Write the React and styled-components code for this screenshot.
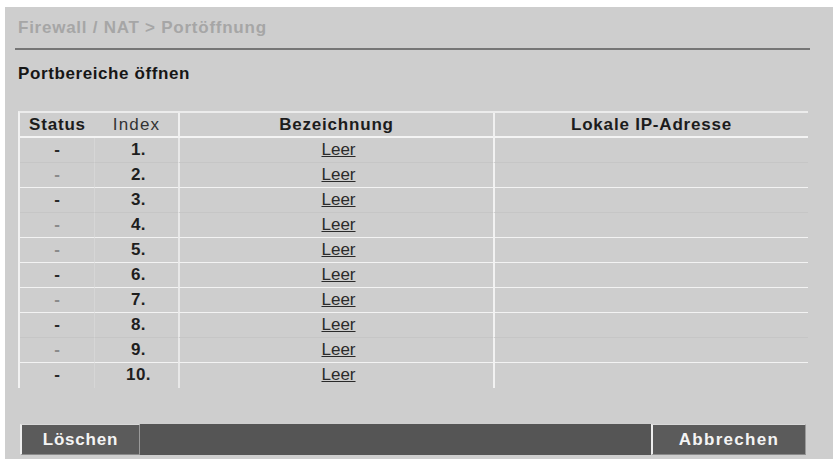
import styled, { createGlobalStyle } from "styled-components";

const GlobalStyle = createGlobalStyle`
    html, body {
        margin: 0;
        padding: 0;
        background: #ffffff;
    }
    body {
        font-family: "Liberation Sans", Arial, sans-serif;
    }
`

const rows = [
    { index: 1, faint: true },
    { index: 2, dim: true },
    { index: 3, faint: true },
    { index: 4, dim: true },
    { index: 5, dim: true },
    { index: 6 },
    { index: 7, dim: true },
    { index: 8, faint: true },
    { index: 9, dim: true },
    { index: 10, last: true },
]

export default function App() {
    return (
        <>
            <GlobalStyle />
            <Panel>
                <Breadcrumb>Firewall / NAT &gt; Portöffnung</Breadcrumb>
                <Rule />
                <Title>Portbereiche öffnen</Title>

                <Table>
                    <HeadCell>Status</HeadCell>
                    <HeadCell light>Index</HeadCell>
                    <HeadCell divider>Bezeichnung</HeadCell>
                    <HeadCell divider>Lokale IP-Adresse</HeadCell>
                    {
                        rows.map(r => (
                            <Row key={r.index} faint={r.faint} last={r.last}>
                                <StatusCell dim={r.dim}>-</StatusCell>
                                <IndexCell>{r.index}.</IndexCell>
                                <NameCell><a href="#">Leer</a></NameCell>
                                <IpCell />
                            </Row>
                        ))
                    }
                </Table>

                <ButtonBar>
                    <Button width="120px">Löschen</Button>
                    <Filler />
                    <Button width="155px" spacing="1.3px">Abbrechen</Button>
                </ButtonBar>
            </Panel>
        </>
    )
}

const Panel = styled.div`
    margin: 7px 4px 0 5px;
    min-height: calc(100vh - 7px);
    box-sizing: border-box;
    background-color: #cecece;
    padding: 10px 23px 0 10px;
    display: flex;
    flex-direction: column;
`
const Breadcrumb = styled.div`
    margin-left: 3px;
    height: 22px;
    line-height: 22px;
    font-size: 17px;
    font-weight: 700;
    letter-spacing: 0.75px;
    color: #a6a6a6;
`
const Rule = styled.div`
    margin-top: 9px;
    height: 2px;
    width: 795px;
    background-color: #767676;
`
const Title = styled.div`
    margin: 13px 0 0 3px;
    height: 22px;
    line-height: 22px;
    font-size: 17px;
    font-weight: 700;
    letter-spacing: 0.6px;
    color: #161616;
`
const Table = styled.div`
    margin: 26px 0 0 3px;
    width: 790px;
    display: grid;
    grid-template-columns: 75px 83px 315px 315px;
    border-top: 2px solid #ececec;
    border-left: 2px solid #f2f2f2;
    box-sizing: border-box;
`
const HeadCell = styled.div`
    height: 23px;
    line-height: 23px;
    text-align: center;
    font-size: 17px;
    font-weight: ${props => props.light ? 400 : 700};
    letter-spacing: ${props => props.light ? "1.2px" : "0.8px"};
    color: ${props => props.light ? "#333" : "#1c1c1c"};
    border-bottom: 2px solid #f4f4f4;
    border-left: ${props => props.divider ? "2px solid #f0f0f0" : "none"};
`
const Row = styled.div`
    display: contents;

    & > div {
        height: ${props => props.last ? "25px" : "24px"};
        line-height: 24px;
        border-bottom: ${props => props.last ? "none" : props.faint ? "1px solid #c6c6c6" : "1px solid #f3f3f3"};
    }
`
const StatusCell = styled.div`
    text-align: center;
    font-size: 17px;
    font-weight: 700;
    color: ${props => props.dim ? "#8a8a8a" : "#2a2a2a"};
    border-right: 1px solid #d6d6d6;
`
const IndexCell = styled.div`
    text-align: center;
    padding-left: 4px;
    font-size: 17px;
    font-weight: 700;
    letter-spacing: 0.5px;
    color: #1e1e1e;
`
const NameCell = styled.div`
    text-align: center;
    padding-left: 4px;
    border-left: 2px solid #e8e8e8;
    font-size: 17px;

    a {
        color: #2a2a2a;
        text-decoration: underline;
    }
`
const IpCell = styled.div`
    border-left: 2px solid #f2f2f2;
`
const ButtonBar = styled.div`
    margin: 36px 0 0 5px;
    width: 786px;
    height: 31px;
    display: flex;
    background-color: #555555;
`
const Button = styled.div`
    width: ${props => props.width};
    box-sizing: border-box;
    display: flex;
    align-items: center;
    justify-content: center;
    background-color: #5b5b5b;
    border-top: 1px solid #d8d8d8;
    border-left: 2px solid #eeeeee;
    border-right: 1px solid #9a9a9a;
    border-bottom: 1px solid #8a8a8a;
    color: #f4f4f4;
    font-size: 17px;
    font-weight: 700;
    letter-spacing: ${props => props.spacing || "0.8px"};
`
const Filler = styled.div`
    flex: 1;
`
